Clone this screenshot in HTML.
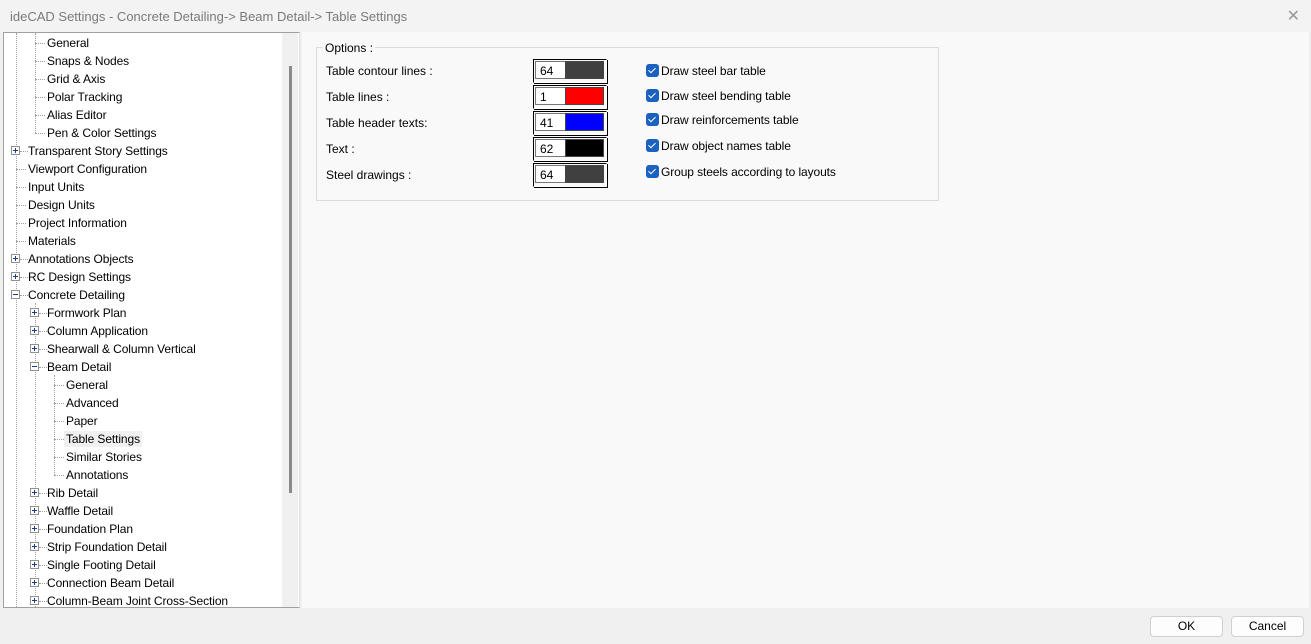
<!DOCTYPE html>
<html><head><style>
*{margin:0;padding:0;box-sizing:border-box}
body{width:1311px;height:644px;background:#f0f0f0;font-family:"Liberation Sans",sans-serif;font-size:12px;color:#000;position:relative;overflow:hidden}
.abs{position:absolute}
.title{left:0;top:0;width:1311px;height:32px;background:#f3f3f3;color:#7a7a7a;font-size:13px;padding:9px 0 0 10px}
.tree{left:3px;top:32px;width:297px;height:576px;background:#fff;border:1px solid #a0a0a0;border-right:1px solid #e0e0e0;overflow:hidden}
.t{position:absolute;white-space:nowrap;line-height:16px;letter-spacing:-0.1px}
.box{position:absolute;width:9px;height:9px;border:1px solid #919191;background:#fff}
.box:before{content:"";position:absolute;left:1px;top:3px;width:5px;height:1px;background:#1c3d8c}
.box.p:after{content:"";position:absolute;left:3px;top:1px;width:1px;height:5px;background:#1c3d8c}
.vl{position:absolute;width:0;border-left:1px dotted #a0a0a0}
.hl{position:absolute;height:0;border-top:1px dotted #a0a0a0}
.right{left:302px;top:32px;width:1007px;height:576px;background:#f9f9f9}
.grp{left:316px;top:47px;width:623px;height:154px;border:1px solid #dcdcdc}
.lbl{position:absolute;left:326px}
.cb{position:absolute;left:533px;width:74px;height:24px;border:1px solid #000;border-right-color:#fff;border-bottom-color:#fff;box-shadow:1px 1px 0 #000}
.cb span{position:absolute;left:1px;top:1px;width:30px;height:18px;background:#fff;padding:3px 0 0 4px;font-size:12px;line-height:12px;border:1px solid #777;border-right:none}
.cb i{position:absolute;left:31px;top:1px;width:39px;height:18px;border:1px solid #444}
.chk{position:absolute;left:646px;width:13px;height:13px;background:#1b62c0;border-radius:3px}
.chk:after{content:"";position:absolute;left:4px;top:2px;width:3px;height:6px;border:solid #fff;border-width:0 1.5px 1.5px 0;transform:rotate(45deg)}
.ct{position:absolute;left:661px;letter-spacing:-0.1px}
.btn{position:absolute;top:616px;height:21px;background:#fdfdfd;border:1px solid #d0d0d0;border-radius:4px;text-align:center;line-height:19px}
</style></head><body>
<div class="abs title">ideCAD Settings - Concrete Detailing-&gt; Beam Detail-&gt; Table Settings</div>
<div class="abs" style="right:11px;top:6px;font-size:16px;color:#999">✕</div>
<div class="abs tree" id="tree">
<div style="position:absolute;left:278px;top:0;width:16px;height:576px;background:#f0f0f0"></div>
<div style="position:absolute;left:285px;top:33px;width:3px;height:427px;background:#8a8a8a"></div>
</div>
<div class="abs right"></div>
<div class="abs grp"></div>
<div class="abs" style="left:323px;top:41px;background:#f9f9f9;padding:0 2px">Options :</div>
<div class="lbl" style="top:64px">Table contour lines :</div>
<div class="lbl" style="top:90px">Table lines :</div>
<div class="lbl" style="top:116px">Table header texts:</div>
<div class="lbl" style="top:142px">Text :</div>
<div class="lbl" style="top:168px">Steel drawings :</div>
<div class="cb" style="top:59px"><span>64</span><i style="background:#404040"></i></div>
<div class="cb" style="top:85px"><span>1</span><i style="background:#f00"></i></div>
<div class="cb" style="top:111px"><span>41</span><i style="background:#00f"></i></div>
<div class="cb" style="top:137px"><span>62</span><i style="background:#000"></i></div>
<div class="cb" style="top:163px"><span>64</span><i style="background:#404040"></i></div>
<div class="chk" style="top:64px"></div><div class="ct" style="top:64px">Draw steel bar table</div>
<div class="chk" style="top:89px"></div><div class="ct" style="top:89px">Draw steel bending table</div>
<div class="chk" style="top:113px"></div><div class="ct" style="top:113px">Draw reinforcements table</div>
<div class="chk" style="top:139px"></div><div class="ct" style="top:139px">Draw object names table</div>
<div class="chk" style="top:165px"></div><div class="ct" style="top:165px">Group steels according to layouts</div>
<div class="btn" style="left:1150px;width:73px">OK</div>
<div class="btn" style="left:1231px;width:73px">Cancel</div>
<script>
var items=[
[1,0,"General"],[1,0,"Snaps & Nodes"],[1,0,"Grid & Axis"],[1,0,"Polar Tracking"],[1,0,"Alias Editor"],[1,0,"Pen & Color Settings"],
[0,"p","Transparent Story Settings"],[0,0,"Viewport Configuration"],[0,0,"Input Units"],[0,0,"Design Units"],[0,0,"Project Information"],[0,0,"Materials"],
[0,"p","Annotations Objects"],[0,"p","RC Design Settings"],[0,"m","Concrete Detailing"],
[1,"p","Formwork Plan"],[1,"p","Column Application"],[1,"p","Shearwall & Column Vertical"],[1,"m","Beam Detail"],
[2,0,"General"],[2,0,"Advanced"],[2,0,"Paper"],[2,0,"Table Settings"],[2,0,"Similar Stories"],[2,0,"Annotations"],
[1,"p","Rib Detail"],[1,"p","Waffle Detail"],[1,"p","Foundation Plan"],[1,"p","Strip Foundation Detail"],[1,"p","Single Footing Detail"],[1,"p","Connection Beam Detail"],[1,"p","Column-Beam Joint Cross-Section"]];
var t=document.getElementById('tree'),h='';
h+='<div class="vl" style="left:12px;top:0;height:576px"></div>';
h+='<div class="vl" style="left:31px;top:0;height:100px"></div>';
h+='<div class="vl" style="left:31px;top:270px;height:306px"></div>';
h+='<div class="vl" style="left:50px;top:342px;height:100px"></div>';
items.forEach(function(it,i){
 var cy=10+18*i, lx=12+19*it[0];
 h+='<div class="hl" style="left:'+lx+'px;top:'+cy+'px;width:'+(it[1]?8:10)+'px;'+(it[1]?'left:'+(lx+4)+'px':'')+'"></div>';
 if(it[1]) h+='<div class="box '+(it[1]=='p'?'p':'')+'" style="left:'+(lx-5)+'px;top:'+(cy-5)+'px"></div>';
 var sel=it[2]=="Table Settings"&&it[0]==2;
 h+='<div class="t" style="left:'+(lx+10)+'px;top:'+(cy-8)+'px;padding:0 2px;'+(sel?'background:#f0f0f0;':'')+'">'+it[2].replace('&','&amp;')+'</div>';
});
t.insertAdjacentHTML('beforeend',h);
</script>
</body></html>
